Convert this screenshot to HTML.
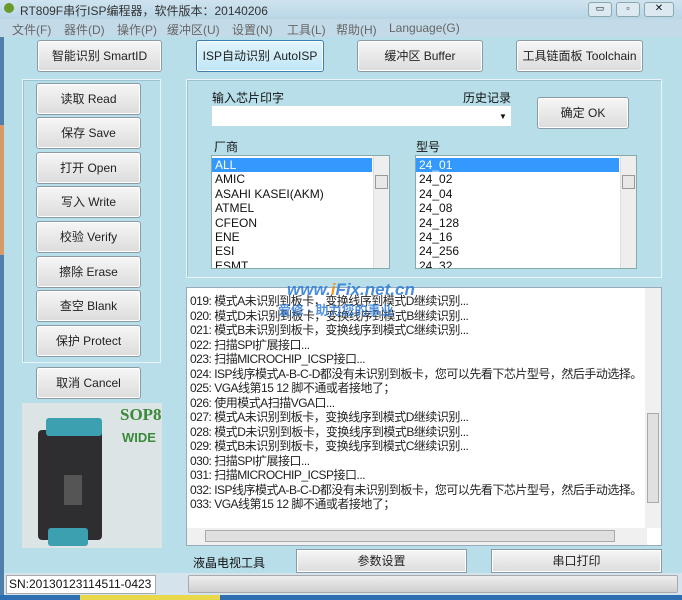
<!DOCTYPE html><html><head><meta charset="utf-8"><style>
*{box-sizing:border-box;margin:0;padding:0}
body{width:682px;height:600px;overflow:hidden;background:#b8dfe9;font-family:"Liberation Sans","Noto Sans CJK SC",sans-serif;font-size:12px;color:#111;position:relative}
.a{position:absolute}
.btn{position:absolute;background:linear-gradient(#f6f6f6,#dcdcdc);border:1px solid #8a9aa6;border-radius:3px;text-align:center;font-size:12px;color:#222;box-shadow:inset 0 0 0 1px #fff}
.box{position:absolute;border:1px solid #e8f4f8;box-shadow:inset 1px 1px 0 #9cc3cf}
.lst{position:absolute;background:#fff;border:1px solid #8aa;overflow:hidden;font-size:12px;line-height:14.4px}
.lst div{padding-left:3px}
.sel{background:#3399ff;color:#fff}
.sb{position:absolute;right:0;top:0;bottom:0;width:16px;background:#eee;border-left:1px solid #ddd}
.log div{height:14.5px;white-space:nowrap;letter-spacing:-0.5px}
.m{position:absolute;top:21px;color:#666;font-size:12px}
</style></head><body>
<div class="a" style="left:0;top:0;width:682px;height:19px;background:linear-gradient(#cfe3ef,#b9d6e6)"></div>
<div class="a" style="left:4px;top:3px;width:10px;height:10px;border-radius:50%;background:#6a9a2a"></div>
<div class="a" style="left:20px;top:2px;font-size:12px;color:#333">RT809F串行ISP编程器，软件版本：20140206</div>
<div class="a" style="left:588px;top:2px;width:24px;height:15px;border:1px solid #8aa;border-radius:3px;background:#dde9f1;font-size:9px;text-align:center">▭</div>
<div class="a" style="left:616px;top:2px;width:24px;height:15px;border:1px solid #8aa;border-radius:3px;background:#dde9f1;font-size:9px;text-align:center">▫</div>
<div class="a" style="left:644px;top:2px;width:30px;height:15px;border:1px solid #8aa;border-radius:3px;background:#dde9f1;font-size:10px;text-align:center">✕</div>
<div class="a" style="left:0;top:19px;width:682px;height:18px;background:#c3dbe8"></div>
<div class="m" style="left:12px">文件(F)</div>
<div class="m" style="left:64px">器件(D)</div>
<div class="m" style="left:117px">操作(P)</div>
<div class="m" style="left:167px">缓冲区(U)</div>
<div class="m" style="left:232px">设置(N)</div>
<div class="m" style="left:287px">工具(L)</div>
<div class="m" style="left:336px">帮助(H)</div>
<div class="m" style="left:389px">Language(G)</div>
<div class="a" style="left:0;top:37px;width:4px;height:558px;background:#4f7fa8"></div>
<div class="a" style="left:0;top:125px;width:4px;height:130px;background:#d79a66"></div>
<div class="btn" style="left:37px;top:40px;width:125px;height:32px;line-height:30px">智能识别 SmartID</div>
<div class="btn" style="left:196px;top:40px;width:128px;height:32px;line-height:30px;background:linear-gradient(#e3f5fc,#bfe6f6);border-color:#3c7fb1">ISP自动识别 AutoISP</div>
<div class="btn" style="left:357px;top:40px;width:126px;height:32px;line-height:30px">缓冲区 Buffer</div>
<div class="btn" style="left:516px;top:40px;width:127px;height:32px;line-height:30px">工具链面板 Toolchain</div>
<div class="box" style="left:22px;top:79px;width:139px;height:284px"></div>
<div class="btn" style="left:36px;top:83px;width:105px;height:32px;line-height:30px">读取 Read</div>
<div class="btn" style="left:36px;top:117px;width:105px;height:32px;line-height:30px">保存 Save</div>
<div class="btn" style="left:36px;top:152px;width:105px;height:32px;line-height:30px">打开 Open</div>
<div class="btn" style="left:36px;top:186px;width:105px;height:32px;line-height:30px">写入 Write</div>
<div class="btn" style="left:36px;top:221px;width:105px;height:32px;line-height:30px">校验 Verify</div>
<div class="btn" style="left:36px;top:256px;width:105px;height:32px;line-height:30px">擦除 Erase</div>
<div class="btn" style="left:36px;top:290px;width:105px;height:32px;line-height:30px">查空 Blank</div>
<div class="btn" style="left:36px;top:325px;width:105px;height:32px;line-height:30px">保护 Protect</div>
<div class="btn" style="left:36px;top:367px;width:105px;height:32px;line-height:30px">取消 Cancel</div>
<div class="a" style="left:22px;top:403px;width:140px;height:145px;background:#dde4e6"></div>
<div class="a" style="left:38px;top:430px;width:64px;height:110px;background:#2e2e30;border-radius:4px"></div>
<div class="a" style="left:46px;top:418px;width:56px;height:18px;background:#3da0b0;border-radius:3px"></div>
<div class="a" style="left:48px;top:528px;width:40px;height:18px;background:#3da0b0;border-radius:3px"></div>
<div class="a" style="left:64px;top:475px;width:18px;height:30px;background:#555"></div>
<div class="a" style="left:120px;top:405px;color:#3a8a3a;font-family:'Liberation Serif',serif;font-size:17px;font-weight:bold">SOP8</div>
<div class="a" style="left:122px;top:430px;color:#3a8a3a;font-size:13px;font-weight:bold">WIDE</div>
<div class="box" style="left:186px;top:79px;width:476px;height:199px"></div>
<div class="a" style="left:212px;top:89px">输入芯片印字</div>
<div class="a" style="left:463px;top:89px">历史记录</div>
<div class="a" style="left:212px;top:106px;width:299px;height:20px;background:#fff"></div>
<div class="a" style="left:499px;top:112px;font-size:8px">▼</div>
<div class="btn" style="left:537px;top:97px;width:92px;height:32px;line-height:30px">确定 OK</div>
<div class="a" style="left:214px;top:138px">厂商</div>
<div class="a" style="left:416px;top:138px">型号</div>
<div class="lst" style="left:211px;top:155px;width:179px;height:114px;padding-top:2px"><div class="sel" style="margin-right:17px">ALL</div><div>AMIC</div><div>ASAHI KASEI(AKM)</div><div>ATMEL</div><div>CFEON</div><div>ENE</div><div>ESI</div><div>ESMT</div><div class="sb"><div style="position:absolute;left:1px;top:19px;width:13px;height:14px;border:1px solid #999;background:#e8e8e8;padding:0"></div></div></div>
<div class="lst" style="left:415px;top:155px;width:222px;height:114px;padding-top:2px"><div class="sel" style="margin-right:17px">24_01</div><div>24_02</div><div>24_04</div><div>24_08</div><div>24_128</div><div>24_16</div><div>24_256</div><div>24_32</div><div class="sb"><div style="position:absolute;left:1px;top:19px;width:13px;height:14px;border:1px solid #999;background:#e8e8e8;padding:0"></div></div></div>
<div class="a log" style="left:186px;top:287px;width:476px;height:259px;background:#fff;border:1px solid #9ab;padding:4px 0 0 3px;font-size:12px;color:#222">
<div>019: 模式A未识别到板卡，变换线序到模式D继续识别...</div>
<div>020: 模式D未识别到板卡，变换线序到模式B继续识别...</div>
<div>021: 模式B未识别到板卡，变换线序到模式C继续识别...</div>
<div>022: 扫描SPI扩展接口...</div>
<div>023: 扫描MICROCHIP_ICSP接口...</div>
<div>024: ISP线序模式A-B-C-D都没有未识别到板卡，您可以先看下芯片型号，然后手动选择。</div>
<div>025: VGA线第15 12 脚不通或者接地了；</div>
<div>026: 使用模式A扫描VGA口...</div>
<div>027: 模式A未识别到板卡，变换线序到模式D继续识别...</div>
<div>028: 模式D未识别到板卡，变换线序到模式B继续识别...</div>
<div>029: 模式B未识别到板卡，变换线序到模式C继续识别...</div>
<div>030: 扫描SPI扩展接口...</div>
<div>031: 扫描MICROCHIP_ICSP接口...</div>
<div>032: ISP线序模式A-B-C-D都没有未识别到板卡，您可以先看下芯片型号，然后手动选择。</div>
<div>033: VGA线第15 12 脚不通或者接地了；</div>
<div style="position:absolute;right:0;top:0;width:16px;height:240px;background:#f0f0f0"><div style="position:absolute;left:2px;top:125px;width:12px;height:90px;background:#e0e0e0;border:1px solid #aaa"></div></div>
<div style="position:absolute;left:0;bottom:0;width:460px;height:17px;background:#f0f0f0"><div style="position:absolute;left:18px;top:2px;width:410px;height:12px;background:#e0e0e0;border:1px solid #aaa"></div></div>
</div>
<div class="a" style="left:287px;top:280px;color:#2a7ad8;font-size:17px;font-weight:bold;font-style:italic;opacity:.85">www.<span style="color:#f08a00">i</span>Fix.net.cn</div>
<div class="a" style="left:278px;top:300px;color:#2a7ad8;font-size:13px;font-weight:bold;opacity:.8">爱修 · 助力您的事业</div>
<div class="a" style="left:186px;top:548px;width:476px;height:25px;background:#b8dfe9"></div>
<div class="a" style="left:193px;top:554px">液晶电视工具</div>
<div class="btn" style="left:296px;top:549px;width:171px;height:24px;line-height:22px;border-radius:0">参数设置</div>
<div class="btn" style="left:491px;top:549px;width:171px;height:24px;line-height:22px;border-radius:0">串口打印</div>
<div class="a" style="left:4px;top:573px;width:678px;height:22px;background:#d5e4ec"></div>
<div class="a" style="left:6px;top:575px;width:150px;height:19px;background:#fff;border:1px solid #aaa;padding-left:2px;line-height:17px;font-size:12px">SN:20130123114511-0423</div>
<div class="a" style="left:188px;top:575px;width:490px;height:18px;background:linear-gradient(#eee,#cfcfcf);border:1px solid #aaa;border-radius:2px"></div>
<div class="a" style="left:0;top:595px;width:682px;height:5px;background:#2d6fb0"></div>
<div class="a" style="left:80px;top:595px;width:140px;height:5px;background:#e8d84a"></div>
</body></html>
